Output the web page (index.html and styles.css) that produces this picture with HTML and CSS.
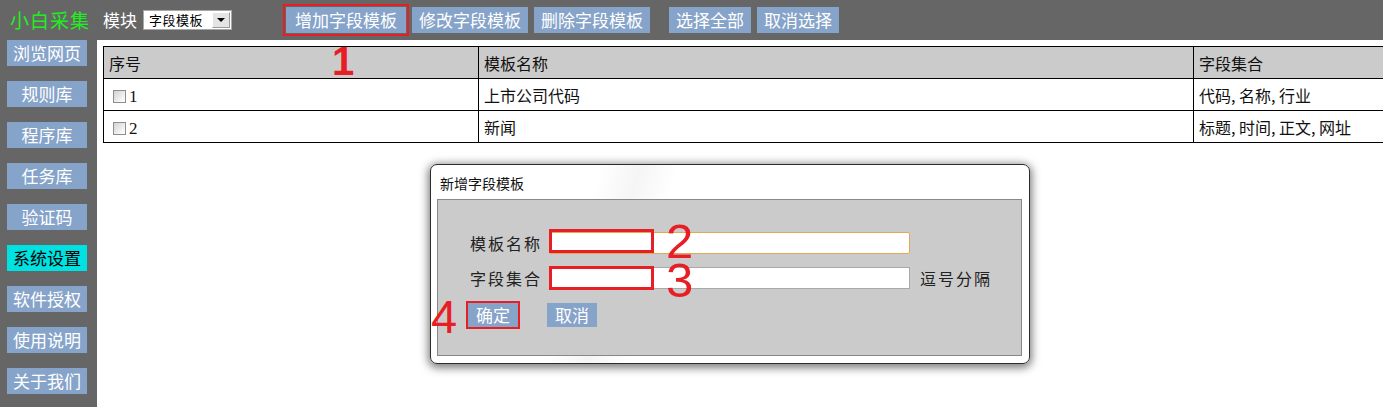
FILE: index.html
```html
<!DOCTYPE html>
<html lang="zh-CN">
<head>
<meta charset="utf-8">
<title>小白采集 - 字段模板</title>
<link rel="stylesheet" href="styles.css">
</head>
<body>
<div class="app">
  <header class="topbar">
    <div class="logo">小白采集</div>
    <div class="module">
      <span class="module-label">模块</span>
      <span class="select"><span class="select-text">字段模板</span><span class="select-arrow"><span class="tri"></span></span></span>
    </div>
    <nav class="actions">
      <span class="btn btn-wide marked">增加字段模板</span>
      <span class="btn">修改字段模板</span>
      <span class="btn">删除字段模板</span>
      <span class="btn btn-sep">选择全部</span>
      <span class="btn">取消选择</span>
    </nav>
  </header>
  <div class="main">
    <aside class="sidebar">
      <span class="side-btn">浏览网页</span>
      <span class="side-btn">规则库</span>
      <span class="side-btn">程序库</span>
      <span class="side-btn">任务库</span>
      <span class="side-btn">验证码</span>
      <span class="side-btn active">系统设置</span>
      <span class="side-btn">软件授权</span>
      <span class="side-btn">使用说明</span>
      <span class="side-btn">关于我们</span>
    </aside>
    <section class="content">
      <table class="grid">
        <colgroup><col class="c1"><col class="c2"><col class="c3"></colgroup>
        <thead>
          <tr><th>序号</th><th>模板名称</th><th>字段集合</th></tr>
        </thead>
        <tbody>
          <tr><td><span class="cb"></span><span class="num">1</span></td><td>上市公司代码</td><td>代码, 名称, 行业</td></tr>
          <tr><td><span class="cb"></span><span class="num">2</span></td><td>新闻</td><td>标题, 时间, 正文, 网址</td></tr>
        </tbody>
      </table>
    </section>
  </div>

  <div class="dialog">
    <div class="dialog-title">新增字段模板</div>
    <div class="dialog-body">
      <div class="form-row">
        <span class="form-label">模板名称</span>
        <span class="field"><span class="input focused"></span><span class="mark-box mark-a"></span></span>
      </div>
      <div class="form-row">
        <span class="form-label">字段集合</span>
        <span class="field"><span class="input"></span><span class="mark-box mark-b"></span></span>
        <span class="hint">逗号分隔</span>
      </div>
      <div class="form-buttons">
        <span class="dlg-btn marked-dlg">确定</span>
        <span class="dlg-btn">取消</span>
      </div>
    </div>
  </div>

  <span class="anno anno-1">1</span>
  <span class="anno anno-2">2</span>
  <span class="anno anno-3">3</span>
  <span class="anno anno-4">4</span>
</div>
</body>
</html>
```
FILE: styles.css
```css
html, body {
  margin: 0;
  padding: 0;
}
body {
  width: 1383px;
  height: 407px;
  overflow: hidden;
  background: #fff;
  font-family: "Noto Sans CJK SC", "Noto Sans", sans-serif;
  color: #000;
}
.app {
  position: relative;
  width: 1383px;
  height: 407px;
}

/* top bar */
.topbar {
  height: 40px;
  background: #666;
  display: flex;
  align-items: center;
}
.logo {
  margin-left: 10px;
  font-size: 19px;
  letter-spacing: 1px;
  line-height: 40px;
  color: #1ef01e;
}
.module {
  margin-left: 13px;
  display: flex;
  align-items: center;
  gap: 6px;
}
.module-label {
  color: #fff;
  font-size: 17px;
  line-height: 40px;
}
.select {
  width: 89px;
  height: 20px;
  box-sizing: border-box;
  border: 1px solid #a8a8a8;
  background: #fff;
  display: flex;
  align-items: center;
  padding-left: 5px;
}
.select-text {
  font-size: 13px;
  line-height: 18px;
  letter-spacing: 0.5px;
}
.select-arrow {
  margin-left: auto;
  margin-right: 1px;
  width: 18px;
  height: 16px;
  box-sizing: border-box;
  border: 1px solid #9a9a9a;
  border-top-color: #fff;
  border-left-color: #fff;
  background: #e4e4e4;
  display: flex;
  align-items: center;
  justify-content: center;
}
.tri {
  width: 0;
  height: 0;
  border-left: 4px solid transparent;
  border-right: 4px solid transparent;
  border-top: 4px solid #000;
}
.actions {
  margin-left: 54px;
  display: flex;
  align-items: center;
  gap: 6px;
}
.btn {
  background: #86a3c9;
  color: #fff;
  font-size: 17px;
  height: 26px;
  line-height: 26px;
  padding: 0 7px;
  white-space: nowrap;
}
.btn-wide {
  padding: 0 9px;
}
.btn-sep {
  margin-left: 13px;
}
.marked {
  outline: 2px solid #e81e25;
  outline-offset: 1px;
}

/* main area */
.main {
  display: flex;
  height: 367px;
}
.sidebar {
  width: 97px;
  flex: none;
  background: #666;
  box-sizing: border-box;
  padding-left: 7px;
  display: flex;
  flex-direction: column;
  gap: 15px;
}
.side-btn {
  width: 80px;
  height: 26px;
  line-height: 26px;
  text-align: center;
  background: #86a3c9;
  color: #fff;
  font-size: 17px;
}
.side-btn.active {
  background: #00e1e1;
  color: #000;
}
.content {
  flex: 1;
  overflow: hidden;
  padding: 6px 0 0 6px;
}
.grid {
  border-collapse: collapse;
  width: 1300px;
  table-layout: fixed;
  font-size: 16px;
}
.c1 { width: 375px; }
.c2 { width: 715px; }
.grid th,
.grid td {
  border: 1px solid #000;
  height: 31px;
  padding: 0 5px;
  text-align: left;
  font-weight: normal;
  white-space: nowrap;
  color: #111;
}
.grid th {
  background: #cbcbcb;
}
.cb {
  display: inline-block;
  width: 11px;
  height: 11px;
  border: 1px solid #8e8e8e;
  background: linear-gradient(135deg, #d2d2d2 0%, #f4f4f4 70%, #fff 100%);
  vertical-align: -1px;
  margin: 0 3px 0 4px;
}
.num {
  font-family: "Liberation Serif", serif;
  font-size: 17px;
}

/* dialog */
.dialog {
  position: absolute;
  left: 430px;
  top: 164px;
  width: 600px;
  height: 200px;
  box-sizing: border-box;
  border: 1px solid #2c2c2c;
  border-radius: 7px;
  background: linear-gradient(105deg, #fff 0%, #fff 26%, #f5f5f5 32%, #fff 38%, #fff 100%);
  box-shadow: 0 2px 8px 2px rgba(0, 0, 0, 0.5);
  padding: 0 7px 7px 6px;
  display: flex;
  flex-direction: column;
}
.dialog-title {
  height: 34px;
  line-height: 36px;
  font-size: 14px;
  padding-left: 3px;
  color: #111;
}
.dialog-body {
  flex: 1;
  background: #cbcbcb;
  border: 1px solid #888;
  padding: 32px 0 0 32px;
}
.form-row {
  display: flex;
  align-items: center;
  height: 22px;
  margin-bottom: 13px;
}
.form-label {
  width: 79px;
  font-size: 16px;
  letter-spacing: 2px;
  color: #222;
}
.field {
  position: relative;
  width: 361px;
  height: 22px;
}
.input {
  display: block;
  width: 361px;
  height: 22px;
  box-sizing: border-box;
  border: 1px solid #a9a9a9;
  background: #fff;
}
.input.focused {
  border-color: #e0aa55;
  border-radius: 2px;
}
.mark-box {
  position: absolute;
  left: 0;
  width: 105px;
  height: 24px;
  box-sizing: border-box;
  border: 3px solid #e81e25;
}
.mark-a { top: -3px; }
.mark-b { top: -1px; }
.hint {
  margin-left: 10px;
  font-size: 16px;
  letter-spacing: 2px;
  color: #222;
}
.form-buttons {
  display: flex;
  gap: 29px;
  margin-top: 14px;
  margin-left: -2px;
}
.dlg-btn {
  background: #86a3c9;
  color: #fff;
  font-size: 17px;
  height: 24px;
  line-height: 24px;
  padding: 0 8px;
}
.marked-dlg {
  outline: 2px solid #e81e25;
  outline-offset: 0;
}

/* annotations */
.anno {
  position: absolute;
  font-family: "Liberation Sans", Arial, sans-serif;
  color: #e81e25;
  line-height: 0.74;
}
.anno-1 {
  left: 332px;
  top: 47px;
  font-size: 40px;
  font-weight: bold;
}
.anno-2 {
  left: 666px;
  top: 223px;
  font-size: 49px;
}
.anno-3 {
  left: 666px;
  top: 262px;
  font-size: 49px;
}
.anno-4 {
  left: 431px;
  top: 300px;
  font-size: 47px;
}
```
